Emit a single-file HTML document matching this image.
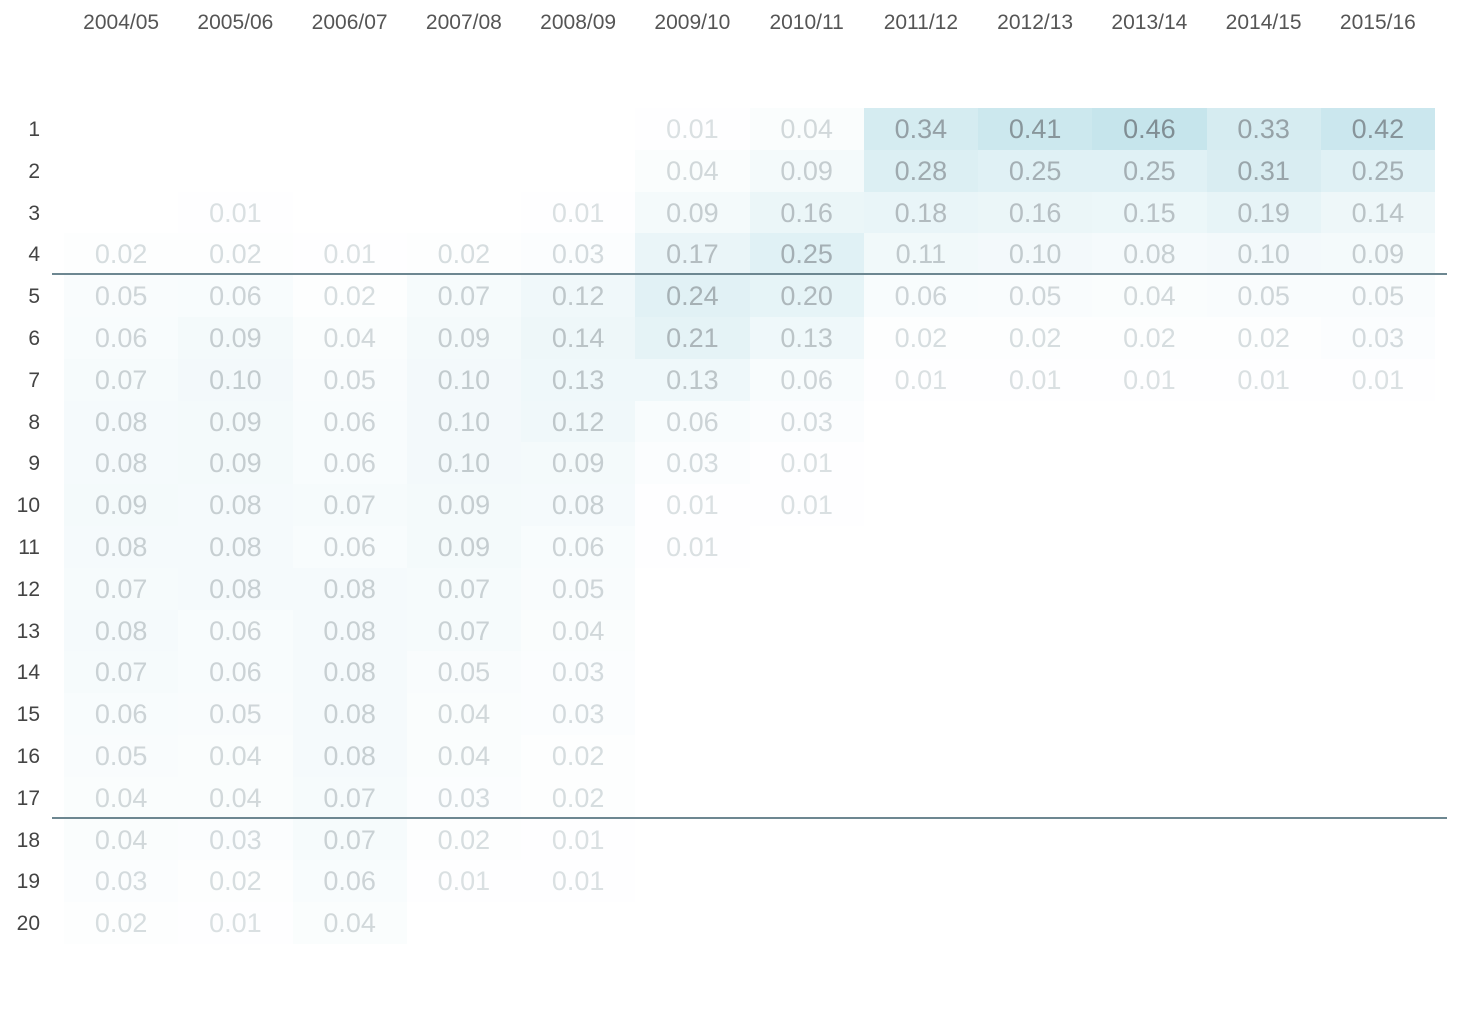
<!DOCTYPE html>
<html><head><meta charset="utf-8"><style>
html,body{margin:0;padding:0;background:#fff;width:1460px;height:1022px;overflow:hidden;font-family:"Liberation Sans",sans-serif}
.c{position:absolute;text-align:center;font-size:27px;line-height:43px}
.h{position:absolute;top:11px;width:114.25px;text-align:center;font-size:21px;color:#555}
.r{position:absolute;left:0;width:40px;text-align:right;font-size:21px;color:#444;line-height:43px}
.ln{position:absolute;left:52px;width:1395px;height:2px;background:#6d8791}
</style></head><body>
<div id="g"></div>
<div class="ln" style="top:273px"></div>
<div class="ln" style="top:817px"></div>
<script>
var heads=["2004/05","2005/06","2006/07","2007/08","2008/09","2009/10","2010/11","2011/12","2012/13","2013/14","2014/15","2015/16"];
var D=[
[4,[.02,.05,.06,.07,.08,.08,.09,.08,.07,.08,.07,.06,.05,.04,.04,.03,.02]],
[3,[.01,.02,.06,.09,.10,.09,.09,.08,.08,.08,.06,.06,.05,.04,.04,.03,.02,.01]],
[4,[.01,.02,.04,.05,.06,.06,.07,.06,.08,.08,.08,.08,.08,.07,.07,.06,.04]],
[4,[.02,.07,.09,.10,.10,.10,.09,.09,.07,.07,.05,.04,.04,.03,.02,.01]],
[3,[.01,.03,.12,.14,.13,.12,.09,.08,.06,.05,.04,.03,.03,.02,.02,.01,.01]],
[1,[.01,.04,.09,.17,.24,.21,.13,.06,.03,.01,.01]],
[1,[.04,.09,.16,.25,.20,.13,.06,.03,.01,.01]],
[1,[.34,.28,.18,.11,.06,.02,.01]],
[1,[.41,.25,.16,.10,.05,.02,.01]],
[1,[.46,.25,.15,.08,.04,.02,.01]],
[1,[.33,.31,.19,.10,.05,.02,.01]],
[1,[.42,.25,.14,.09,.05,.03,.01]]];
var h="",W=114.25,X0=64,Y0=108,H=41.8;
function mix(a,b,t){return "rgb("+a.map(function(v,i){return Math.round(v+(b[i]-v)*t)}).join(",")+")";}
for(var i=0;i<12;i++)h+='<div class="h" style="left:'+(X0+i*W)+'px">'+heads[i]+'</div>';
for(var r=1;r<=20;r++)h+='<div class="r" style="top:'+(Y0+(r-1)*H)+'px">'+r+'</div>';
for(var i=0;i<12;i++){var s=D[i][0],a=D[i][1];for(var k=0;k<a.length;k++){var v=a[k],t=Math.min(1,v/0.46);
var bg=mix([255,255,255],[198,229,236],t);var fg=mix([222,228,230],[128,142,148],Math.pow(t,0.8));
h+='<div class="c" style="left:'+(X0+i*W)+'px;top:'+(Y0+(s+k-1)*H)+'px;width:'+W+'px;height:'+H+'px;background:'+bg+';color:'+fg+'">'+v.toFixed(2)+'</div>';}}
document.getElementById("g").innerHTML=h;
</script>
</body></html>
